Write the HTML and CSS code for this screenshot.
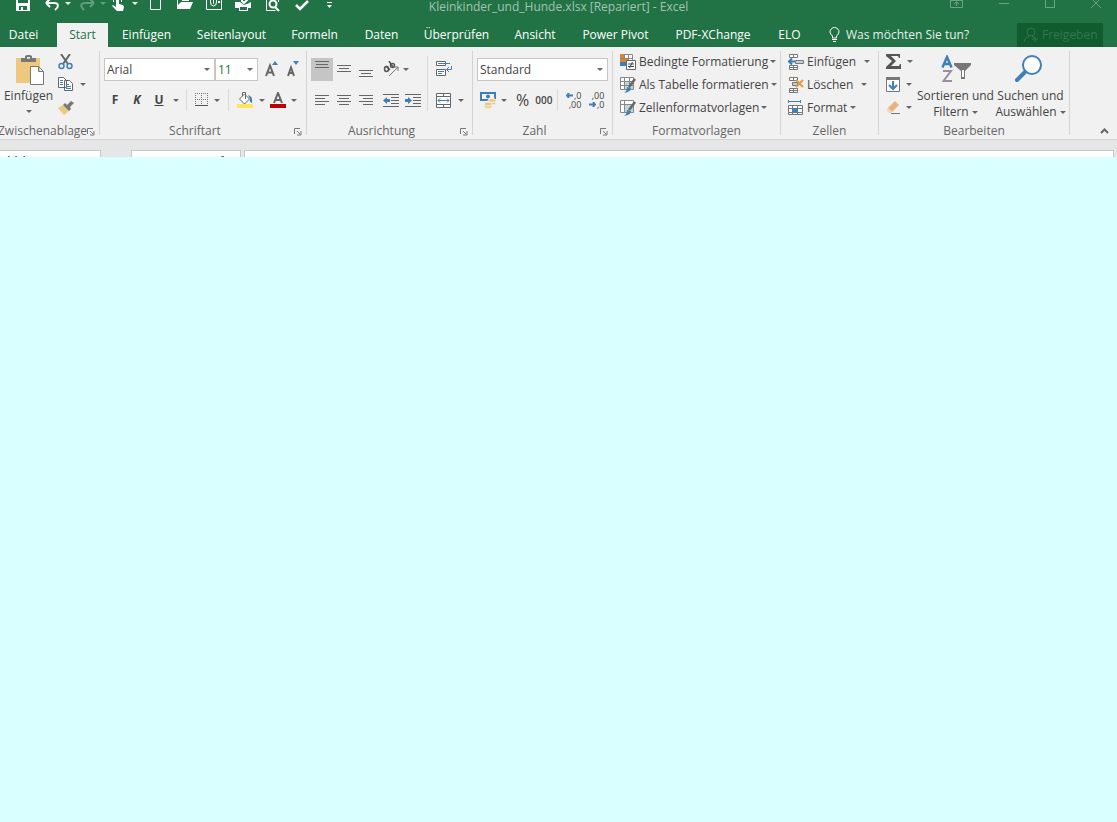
FILE: index.html
```html
<!DOCTYPE html>
<html lang="de">
<head>
<meta charset="utf-8">
<title>Kleinkinder_und_Hunde.xlsx [Repariert] - Excel</title>
<link rel="stylesheet" href="styles.css">
</head>
<body>
<header class="app-header">
  <div class="titlebar">
    <div class="qat">
      <button aria-label="Speichern"><svg width="14" height="12" viewBox="0 0 14 12"><path fill="#fff" fill-rule="evenodd" d="M0 0h2v3h10V0h2v11H0zM3 6v4h2V7h2v3h4V6z"/></svg></button>
      <button aria-label="Rückgängig"><svg width="16" height="12" viewBox="0 0 16 12"><path d="M1 3h8c5 0 5 4 1 7M1 3l4-4M1 3l4 4" fill="none" stroke="#fff" stroke-width="2"/></svg><i class="caret light"></i></button>
      <button class="dim" aria-label="Wiederholen"><svg width="16" height="12" viewBox="0 0 16 12"><path d="M14 3H6C0 3 0 6 4 10M14 3l-4-4M14 3l-4 4" fill="none" stroke="#fff" stroke-width="2"/></svg><i class="caret light"></i></button>
      <button aria-label="Fingereingabe"><svg width="13" height="12" viewBox="0 0 13 12"><path fill="#fff" d="M4 0h3v4l4 1 1 2-1 4H5L0 6l1-1 3 2zM1 0h1v2H1zM9 0h1v2H9z"/></svg><i class="caret light hand"></i></button>
      <button aria-label="Neu"><svg width="12" height="12" viewBox="0 0 12 12"><path d="M.5-2V9.500h10V-2" fill="none" stroke="#fff"/></svg></button>
      <button aria-label="Öffnen"><svg width="17" height="12" viewBox="0 0 17 12"><path fill="#fff" d="M0 0h1v5l3-3h12l-3 7H0zM5 0h7v1H5z"/></svg></button>
      <button aria-label="Kamera"><svg width="16" height="12" viewBox="0 0 16 12"><path d="M.5-1v10.500h15V-1M4.500 0v2q0 4 3 4t3-4V0M7.500 0v4" fill="none" stroke="#fff"/><path fill="#fff" d="M12 1h2v2h-2z"/></svg></button>
      <button aria-label="Schnelldruck"><svg width="17" height="12" viewBox="0 0 17 12"><path fill="#fff" fill-rule="evenodd" d="M0 2h5l4 3 3-1 4-2v6h-3v3H4V8H0zM5 7v3h7V7z"/><path d="M7-2v3l2 2 5-5" fill="none" stroke="#fff" stroke-width="2"/></svg></button>
      <button aria-label="Seitenansicht"><svg width="16" height="12" viewBox="0 0 16 12"><path d="M.5-1v11.500h9M12.500 0v2" fill="none" stroke="#fff"/><circle cx="7" cy="4" r="3.500" fill="none" stroke="#fff" stroke-width="2"/><path d="M9 7l4 4" stroke="#fff" stroke-width="2"/></svg></button>
      <button aria-label="Rechtschreibung"><svg width="14" height="12" viewBox="0 0 14 12"><path d="M1 5l4 4 8-8" fill="none" stroke="#fff" stroke-width="2.500"/></svg></button>
      <button aria-label="Symbolleiste anpassen"><svg width="7" height="12" viewBox="0 0 7 12"><path fill="#fff" d="M1 2h5v1H1zM1 5h5L3.500 8z"/></svg></button>
    </div>
    <div class="doc-title">Kleinkinder_und_Hunde.xlsx [Repariert] - Excel</div>
    <div class="window-controls">
      <button aria-label="Menübandanzeige"><svg width="14" height="12" viewBox="0 0 14 12"><path d="M.5-1v8.500h12V-1M0 .5h13M6.500 6V2M4 4l2.500-2L9 4"/></svg></button>
      <button aria-label="Minimieren"><svg width="11" height="12" viewBox="0 0 11 12"><path d="M0 3.500h10"/></svg></button>
      <button aria-label="Maximieren"><svg width="11" height="12" viewBox="0 0 11 12"><path d="M.5-1v8.500h9V-1"/></svg></button>
      <button aria-label="Schließen"><svg width="11" height="12" viewBox="0 0 11 12"><path d="M0-2l10 10M10-2L0 8"/></svg></button>
    </div>
  </div>
  <div class="tabbar">
    <nav class="tabs">
      <button class="file">Datei</button><button class="active">Start</button><button>Einfügen</button><button>Seitenlayout</button><button>Formeln</button><button>Daten</button><button>Überprüfen</button><button>Ansicht</button><button>Power Pivot</button><button>PDF-XChange</button><button>ELO</button>
    </nav>
    <button class="tell-me"><svg width="11" height="16" viewBox="0 0 11 16"><path d="M3.500 11V9Q1 7 1 5a4.500 4.500 0 0 1 9 0q0 2-2.500 4v2zM3 12.500h5M4 14.500h3" fill="none" stroke="#fff"/></svg>Was möchten Sie tun?</button>
    <button class="share"><svg width="16" height="16" viewBox="0 0 16 16"><circle cx="8" cy="5" r="4"/><path d="M1 15q0-4 5-6M9 9l2 2M12 9v6M9 12h6"/></svg>Freigeben</button>
  </div>
</header>

<section class="ribbon">
  <div class="group clipboard">
    <div class="body">
      <button class="big"><svg width="30" height="31" viewBox="0 0 30 31"><path fill="#edc87e" d="M0 3h24v25H0z"/><path fill="#777" fill-rule="evenodd" d="M5 3h4V1l2-1h3l2 1v2h4v4H5zm6-1v2h3V2z"/><path fill="#fff" stroke="#777" d="M14.500 11.500h8l5 5v13h-13zM22.500 11.500v5h5"/></svg><span>Einfügen</span><i class="caret"></i></button>
      <div class="stack">
        <button aria-label="Ausschneiden"><svg width="16" height="16" viewBox="0 0 16 16"><path d="M3 0l7 10M12 0L5 10" fill="none" stroke="#666" stroke-width="2"/><circle cx="3.500" cy="12" r="2.500" fill="none" stroke="#3f7fb8" stroke-width="1.500"/><circle cx="11.500" cy="12" r="2.500" fill="none" stroke="#3f7fb8" stroke-width="1.500"/></svg></button>
        <button aria-label="Kopieren"><svg width="16" height="15" viewBox="0 0 16 15"><path fill="#fff" stroke="#666" d="M.5.500h5l3 3v7h-8zM6.500 3.500h5l3 3v7h-8z"/><path d="M2 3.500h3M2 5.500h3M2 7.500h3M8 7.500h3M8 9.500h5M8 11.500h5" stroke="#3f7fb8"/></svg><i class="caret"></i></button>
        <button aria-label="Format übertragen"><svg width="16" height="14" viewBox="0 0 16 14"><path fill="#edc87e" d="M0 7l5-3 6 6-5 4z"/><path fill="#777" d="M5 4l2-2 2 2 4-4 3 2-4 4 1 2-2 2z"/></svg></button>
      </div>
    </div>
    <footer><span>Zwischenablage</span><button class="launch" aria-label="Zwischenablage öffnen"><svg width="8" height="8" viewBox="0 0 8 8"><path d="M.5 6V.5H6M3 3l3 3M7 3v4H3" fill="none" stroke="#777"/></svg></button></footer>
  </div>

  <div class="group font">
    <div class="body rows">
      <div class="row">
        <label class="combo name"><input value="Arial" aria-label="Schriftart"><i class="caret"></i></label><label class="combo size"><input value="11" aria-label="Schriftgrad"><i class="caret"></i></label>
        <button class="grow" aria-label="Schriftgrad vergrößern"><svg width="14" height="16" viewBox="0 0 14 16"><path class="a" d="M1 15L5 4.500 9 15M2.500 11.500h5"/><path class="tri" d="M7 4l3-4 3 4z"/></svg></button>
        <button class="grow" aria-label="Schriftgrad verkleinern"><svg width="14" height="16" viewBox="0 0 14 16"><path class="a" d="M2 15l3-8.500L8 15M3 12h4"/><path class="tri" d="M7 0h6l-3 4z"/></svg></button>
      </div>
      <div class="row second">
        <button class="letter">F</button><button class="letter italic">K</button><button class="letter underline">U</button><button class="drop" aria-label="Unterstreichen"><i class="caret"></i></button>
        <span class="sep"></span>
        <button class="pair" aria-label="Rahmen"><svg width="14" height="14" viewBox="0 0 14 14"><path d="M.5 0v12M6.500 0v12M12.500 0v12M0 .5h13M0 6.500h13" stroke="#777" stroke-dasharray="1 1"/><path d="M0 12.500h13" stroke="#555"/></svg><i class="caret"></i></button>
        <span class="sep"></span>
        <button class="pair" aria-label="Füllfarbe"><svg width="17" height="16" viewBox="0 0 17 16"><path d="M2.500 7l5-5 5 5-5 5zM5.500 4V.5h3V7" fill="#fff" stroke="#666"/><path fill="#3f7fb8" d="M11 3q5 1 4 8-3-1-2-4z"/><path fill="#ffe658" d="M0 12h16v4H0z"/></svg><i class="caret"></i></button>
        <button class="pair" aria-label="Schriftfarbe"><svg width="16" height="16" viewBox="0 0 16 16"><path d="M4 11L8 1l4 10M5 8h6" fill="none" stroke="#666" stroke-width="2"/><path fill="#c00000" d="M0 12h16v4H0z"/></svg><i class="caret"></i></button>
      </div>
    </div>
    <footer><span>Schriftart</span><button class="launch" aria-label="Schriftart öffnen"><svg width="8" height="8" viewBox="0 0 8 8"><path d="M.5 6V.5H6M3 3l3 3M7 3v4H3" fill="none" stroke="#777"/></svg></button></footer>
  </div>

  <div class="group align">
    <div class="body">
      <div class="rows">
        <div class="row">
          <button class="tool pressed" aria-label="Oben ausrichten"><svg width="14" height="16" viewBox="0 0 14 16"><path d="M0 .5h14M1 3.500h12M0 6.500h14"/></svg></button>
          <button class="tool" aria-label="Zentriert ausrichten"><svg width="14" height="16" viewBox="0 0 14 16"><path d="M0 4.500h14M2 7.500h10M0 10.500h14"/></svg></button>
          <button class="tool" aria-label="Unten ausrichten"><svg width="14" height="16" viewBox="0 0 14 16"><path d="M0 9.500h14M2 12.500h10M0 15.500h14"/></svg></button>
          <button class="pair orient" aria-label="Ausrichtung"><svg width="17" height="16" viewBox="0 0 17 16"><g fill="none" stroke="#555" stroke-width="1.500"><ellipse cx="3.500" cy="8" rx="2" ry="2.500"/><path d="M3 5l4 4M6 0l4 6"/><circle cx="9.500" cy="4.500" r="2"/></g><path d="M6 15l9-9M11 6h4v4" fill="none" stroke="#777"/></svg><i class="caret"></i></button>
        </div>
        <div class="row second">
          <button class="tool" aria-label="Linksbündig"><svg width="14" height="11" viewBox="0 0 14 11"><path d="M0 .5h14M0 3.500h10M0 6.500h14M0 9.500h10"/></svg></button>
          <button class="tool" aria-label="Zentriert"><svg width="14" height="11" viewBox="0 0 14 11"><path d="M0 .5h14M2 3.500h10M0 6.500h14M2 9.500h10"/></svg></button>
          <button class="tool" aria-label="Rechtsbündig"><svg width="14" height="11" viewBox="0 0 14 11"><path d="M0 .5h14M4 3.500h10M0 6.500h14M4 9.500h10"/></svg></button>
          <button class="tool indent" aria-label="Einzug verkleinern"><svg width="16" height="13" viewBox="0 0 16 13"><path d="M0 .5h16M8 3.500h8M8 6.500h8M8 9.500h8M0 12.500h16"/><path class="blue" d="M0 6.500L4 3v2h3v3H4v2z"/></svg></button>
          <button class="tool" aria-label="Einzug vergrößern"><svg width="16" height="13" viewBox="0 0 16 13"><path d="M0 .5h16M8 3.500h8M8 6.500h8M8 9.500h8M0 12.500h16"/><path class="blue" d="M7 6.500L3 3v2H0v3h3v2z"/></svg></button>
        </div>
      </div>
      <span class="sep tall"></span>
      <div class="rows merge">
        <div class="row"><button aria-label="Textumbruch"><svg width="17" height="16" viewBox="0 0 17 16"><path d="M.5.500h9v4h-9zM.5 8.500h9v6h-9z" fill="#fff" stroke="#666"/><path d="M2 2.500h12M2 10.500h6M2 12.500h4M15.500 5v3.500H11M13 6l-2.500 2.500L13 11" fill="none" stroke="#3f7fb8"/></svg></button></div>
        <div class="row second"><button class="pair" aria-label="Verbinden"><svg width="16" height="15" viewBox="0 0 16 15"><path d="M.5.500h14v14H.5zM.5 3.500h14M.5 11.500h14M7.500.5v3M7.500 11.500v3" fill="#fff" stroke="#666"/><path d="M2 7.500h11M4 5.500l-2 2 2 2M11 5.500l2 2-2 2" fill="none" stroke="#3f7fb8"/></svg><i class="caret"></i></button></div>
      </div>
    </div>
    <footer><span>Ausrichtung</span><button class="launch" aria-label="Ausrichtung öffnen"><svg width="8" height="8" viewBox="0 0 8 8"><path d="M.5 6V.5H6M3 3l3 3M7 3v4H3" fill="none" stroke="#777"/></svg></button></footer>
  </div>

  <div class="group number">
    <div class="body rows">
      <div class="row"><label class="combo format"><input value="Standard" aria-label="Zahlenformat"><i class="caret"></i></label></div>
      <div class="row second">
        <button class="pair" aria-label="Buchhaltungsformat"><svg width="17" height="17" viewBox="0 0 17 17"><path fill="#3f7fb8" fill-rule="evenodd" d="M0 0h16v9H0zM2 2v5h12V2z"/><circle cx="8" cy="4.500" r="2" fill="#3f7fb8"/><g fill="#edc87e" stroke="#f1f1f1"><ellipse cx="12" cy="11" rx="4" ry="2"/><ellipse cx="12" cy="8.500" rx="4" ry="2"/><ellipse cx="8" cy="14.500" rx="4" ry="2"/><ellipse cx="8" cy="12" rx="4" ry="2"/></g></svg><i class="caret"></i></button>
        <button class="percent">%</button><button class="thousand">000</button>
        <span class="sep"></span>
        <button class="decimal" aria-label="Dezimalstelle hinzufügen"><svg width="7" height="5" viewBox="0 0 7 5"><path d="M7 2.500H1M3 0L1 2.500 3 5"/></svg><span>,0</span><span class="full">,00</span></button>
        <button class="decimal" aria-label="Dezimalstelle löschen"><span class="full">,00</span><svg width="7" height="5" viewBox="0 0 7 5"><path d="M0 2.500h6M4 0l2 2.500L4 5"/></svg><span>,0</span></button>
      </div>
    </div>
    <footer><span>Zahl</span><button class="launch" aria-label="Zahl öffnen"><svg width="8" height="8" viewBox="0 0 8 8"><path d="M.5 6V.5H6M3 3l3 3M7 3v4H3" fill="none" stroke="#777"/></svg></button></footer>
  </div>

  <div class="group styles">
    <div class="body list">
      <button><svg width="16" height="16" viewBox="0 0 16 16"><path fill="#fff" stroke="#888" d="M.5.500h12v11H.5zM4.500 0v12M8.500 0v12M0 4.500h12"/><path fill="#d8862f" d="M0 0h4v4H0zM0 5h8v3H0zM0 9h4v3H0z"/><path fill="#3f7fb8" d="M0 8h6v4H0z"/><path fill="#fff" stroke="#666" d="M6.500 6.500h9v9h-9z"/><path d="M8 10h6M8 12.500h6M12.500 8l-3 6" stroke="#444"/></svg><span>Bedingte Formatierung</span><i class="caret"></i></button>
      <button><svg width="16" height="16" viewBox="0 0 16 16"><path fill="#fff" stroke="#888" d="M.5.500h13v12H.5z"/><path fill="#bcd6dc" d="M5 4h8v8H5z"/><path d="M4.500 0v13M9.500 0v13M0 4.500h14M0 8.500h14" stroke="#888"/><path d="M15 2l-6 8" stroke="#666" stroke-width="2.500"/><path fill="#3f7fb8" d="M7 10l4 1q0 4-7 5 3-2 3-6z"/></svg><span>Als Tabelle formatieren</span><i class="caret"></i></button>
      <button><svg width="16" height="16" viewBox="0 0 16 16"><path fill="#fff" stroke="#888" d="M.5.500h13v12H.5z"/><path d="M4.500 0v13M0 4.500h14" stroke="#888"/><path fill="#bcd6dc" d="M5 5h8v7H5z"/><path d="M15 2l-6 8" stroke="#666" stroke-width="2.500"/><path fill="#3f7fb8" d="M7 10l4 1q0 4-7 5 3-2 3-6z"/></svg><span>Zellenformatvorlagen</span><i class="caret"></i></button>
    </div>
    <footer><span>Formatvorlagen</span></footer>
  </div>

  <div class="group cells">
    <div class="body list">
      <button><svg width="16" height="16" viewBox="0 0 16 16"><path fill="#fff" stroke="#777" d="M1.500.5h8v3h-8zM5.500.5v3M1.500 11.500h8v4h-8zM5.500 11.500v4M1.500 13.500h8"/><path fill="#b9d4dd" stroke="#777" d="M7.500 6.500h8v3h-8z"/><path d="M7 7.500H1M4 4.500l-3 3 3 3" fill="none" stroke="#3f7fb8" stroke-width="2"/></svg><span class="wide">Einfügen</span><i class="caret"></i></button>
      <button><svg width="16" height="16" viewBox="0 0 16 16"><path fill="#fff" stroke="#777" d="M1.500.5h8v3h-8zM5.500.5v3M1.500 11.500h8v4h-8zM5.500 11.500v4M1.500 13.500h8"/><path fill="#b9d4dd" stroke="#777" d="M4.500 5.500h5v3h-5z"/><path d="M8 3l7 7M15 3l-7 7" stroke="#e09b3f" stroke-width="2"/></svg><span class="wide">Löschen</span><i class="caret"></i></button>
      <button><svg width="16" height="16" viewBox="0 0 16 16"><path d="M.5 0v3M12.500 0v3M1 1.500h11" stroke="#3f7fb8"/><path fill="#fff" stroke="#777" d="M.5 5.500h14v9H.5zM4.500 5v10M9.500 5v10M0 8.500h15M0 12.500h15"/><path fill="#3f7fb8" d="M4 8h6v4H4z"/></svg><span>Format</span><i class="caret"></i></button>
    </div>
    <footer><span>Zellen</span></footer>
  </div>

  <div class="group edit">
    <div class="body">
      <div class="stack">
        <button aria-label="Summe"><svg width="15" height="15" viewBox="0 0 15 15"><path fill="#555" d="M0 0h14v4h-1l-1-2H5l5 5-5 5h8l1-2h1v5H0v-2l6-6-6-5z"/></svg><i class="caret"></i></button>
        <button aria-label="Ausfüllen"><svg width="14" height="16" viewBox="0 0 14 16"><path fill="#fff" stroke="#777" d="M.5.500h13v14H.5z"/><path d="M0 1.500h14" stroke="#777" stroke-width="3"/><path d="M7 4v8M3 8l4 4 4-4" fill="none" stroke="#3f7fb8" stroke-width="2"/></svg><i class="caret"></i></button>
        <button aria-label="Löschen"><svg width="14" height="14" viewBox="0 0 14 14"><path fill="#e9b27d" d="M2 7l7-7 4 4-7 7z"/><path fill="#f6d5b5" d="M1 8l1-1 4 4-1 1H3L1 10z"/><path d="M5 12.500h9" stroke="#777"/></svg><i class="caret"></i></button>
      </div>
      <button class="big"><svg width="30" height="28" viewBox="0 0 30 28"><path d="M1.500 12.500L6 2l4.500 10.500M3 9h6" fill="none" stroke="#3f7fb8" stroke-width="2.500"/><path d="M2 16h8L2.500 26H11" fill="none" stroke="#9a8f9c" stroke-width="2"/><path fill="#777" d="M13 8h17v2l-6 6v8h-4v-8l-7-6z"/><path fill="#fff" d="M21 15h2v7h-2z"/></svg><span>Sortieren und<br>Filtern <i class="caret"></i></span></button>
      <button class="big find"><svg width="30" height="28" viewBox="0 0 30 28"><circle cx="18" cy="10" r="9" fill="#fff" stroke="#3f7fb8" stroke-width="2"/><path d="M11 17l-8 8" stroke="#3f7fb8" stroke-width="4" stroke-linecap="round"/></svg><span>Suchen und<br>Auswählen <i class="caret"></i></span></button>
    </div>
    <footer><span>Bearbeiten</span></footer>
  </div>
  <button class="collapse" aria-label="Menüband reduzieren"><svg width="9" height="6" viewBox="0 0 9 6"><path d="M1 5l3.500-3.500L8 5" fill="none" stroke="#666" stroke-width="2"/></svg></button>
</section>

<section class="formula-bar">
  <input class="name-box" value="A14" aria-label="Namenfeld">
  <div class="functions"><button aria-label="Funktion einfügen"><svg width="10" height="12" viewBox="0 0 10 12"><path d="M7 .5H5Q3 .5 3 4v7M1 4h5" fill="none" stroke="#666"/></svg></button></div>
  <input class="formula" aria-label="Bearbeitungsleiste">
</section>
<main class="sheet"></main>
</body>
</html>
```
FILE: styles.css
```css
* { box-sizing: border-box; }
body {
  margin: 0;
  min-height: 100vh;
  display: flex;
  flex-direction: column;
  font: 12px/16px "Open Sans", "Noto Sans", sans-serif;
  color: #444;
  background: #d9ffff;
  overflow: hidden;
}
button {
  padding: 0;
  border: 0;
  background: none;
  font: inherit;
  color: inherit;
  display: flex;
  align-items: center;
}
input { font: inherit; color: inherit; border: 0; outline: 0; padding: 0; background: none; }
svg { display: block; flex: none; }
.caret {
  display: inline-block;
  flex: none;
  border: 3px solid transparent;
  border-top-color: #666;
  border-bottom: 0;
}
.caret.light { border-top-color: #fff; }

.app-header { background: #217346; color: #fff; }
.titlebar { display: grid; grid-template-columns: 1fr auto 1fr; height: 23px; align-items: start; }
.qat {
  display: grid;
  grid-template-columns: 29px 35px 32px 38px 27px 29px 29px 31px 29px 31px 7px;
  padding-left: 16px;
}
.qat button { gap: 4px; }
.qat .hand { margin-left: 3px; }
.qat .caret { margin-bottom: 6px; }
.dim { opacity: .3; }
.doc-title { color: #a3c4b1; line-height: 14px; }
.window-controls { display: flex; justify-content: flex-end; gap: 35px; padding-right: 15px; }
.window-controls path { fill: none; stroke: #6da385; }
.tabbar { display: flex; height: 24px; }
.tabs { display: grid; grid-template-columns: 57px 51px 77px 93px 73px 61px 89px 68px 93px 102px 51px; }
.tabs button { justify-content: center; white-space: nowrap; }
.tabs .file { padding-right: 10px; }
.tabs .active { background: #f1f1f1; color: #217346; }
.tell-me { gap: 6px; margin-left: 14px; color: #e4efe8; }
.share { gap: 3px; margin: 0 14px 0 auto; padding: 0 6px; background: #105c2f; color: #32774d; width: 86px; }
.share svg { fill: none; stroke: #32774d; }

.ribbon { display: flex; height: 93px; padding-top: 4px; background: #f1f1f1; border-bottom: 1px solid #d2d2d2; }
.group { display: flex; flex-direction: column; flex: none; border-right: 1px solid #d4d4d4; margin-bottom: 4px; }
.body { display: flex; flex: 1; }
.group footer { position: relative; display: flex; justify-content: center; height: 8px; align-items: center; color: #666; white-space: nowrap; }
.launch { position: absolute; right: 4px; top: 1px; }
.clipboard { width: 100px; }
.font { width: 207px; }
.align { width: 166px; }
.number { width: 140px; }
.styles { width: 168px; }
.cells { width: 98px; }
.edit { width: 191px; }

.clipboard footer { justify-content: flex-start; }
.clipboard footer span { margin-left: -2px; }
.font footer, .align footer, .number footer { padding-right: 16px; }

.big { flex-direction: column; text-align: center; white-space: nowrap; }
.clipboard .big { width: 57px; padding-top: 4px; }
.clipboard .big svg { margin-left: 5px; }
.clipboard .big span { margin: 2px 0 6px; }
.stack { display: flex; flex-direction: column; }
.stack button { height: 23px; gap: 6px; }
.clipboard .stack { padding-left: 1px; }
.clipboard .stack, .edit .stack { margin-top: -1px; }

.rows { display: flex; flex-direction: column; }
.row { display: flex; align-items: center; height: 22px; margin-top: 7px; }
.row.second { margin-top: 9px; }
.sep { width: 1px; height: 22px; background: #d8d8d8; }
.sep.tall { height: 55px; margin-top: 5px; }
.pair { gap: 7px; }
.combo { display: flex; align-items: center; height: 23px; padding: 0 4px 0 2px; border: 1px solid #c6c6c6; background: #fff; }
.combo input { flex: 1; min-width: 0; width: 0; padding-top: 2px; }
.font .body { padding-left: 4px; }
.name { width: 111px; }
.size { width: 43px; }
.size input { color: #217346; }
.grow { margin-left: 7px; }
.grow .a { fill: none; stroke: #666; stroke-width: 2; }
.grow .tri { fill: #3f7fb8; }
.letter { width: 22px; justify-content: center; font-weight: 700; }
.italic { font-style: italic; }
.underline { text-decoration: underline; }
.drop { width: 16px; padding-left: 3px; }
.font .second .pair { margin-left: 5px; gap: 5px; }
.font .second .sep + .pair { margin-left: 8px; }
.font .second .pair + .sep { margin-left: 8px; }

.align .body { padding-left: 4px; }
.tool { width: 22px; height: 23px; justify-content: center; }
.tool svg { fill: none; stroke: #666; }
.tool .blue { fill: #3f7fb8; stroke: none; }
.pressed { background: #c5c5c5; }
.orient { margin-left: 6px; gap: 3px; }
.indent { margin-left: 3px; }
.align .sep { margin-left: 3px; }
.merge { padding-left: 8px; }
.merge .pair { gap: 6px; }

.number .body { padding-left: 4px; }
.format { width: 131px; }
.number .pair { margin-left: 3px; gap: 4px; }
.percent { margin-left: 9px; font-size: 16px; }
.thousand { margin: 0 5px 0 6px; font-size: 10px; font-weight: 600; }
.decimal {
  display: grid;
  grid-template-columns: 7px 8px;
  align-items: center;
  justify-items: end;
  width: 15px;
  margin-left: 8px;
  font-size: 9px;
  line-height: 9px;
}
.decimal .full { grid-column: 1 / 3; }
.decimal svg { fill: none; stroke: #3f7fb8; stroke-width: 2; }

.list { flex-direction: column; padding-left: 7px; margin-top: -1px; }
.list button { height: 23px; gap: 3px; white-space: nowrap; }
.styles .list button { gap: 2px; }
.styles .list svg { margin-right: 1px; }
.wide { margin-right: 5px; }
.edit .stack { padding-left: 7px; width: 39px; }
.edit .big { width: 75px; padding-top: 4px; }
.edit .big svg { margin-bottom: 5px; }
.edit .find svg { margin-right: 4px; }
.edit .big .caret { vertical-align: 2px; }
.collapse { margin: auto 8px 5px auto; }

.formula-bar { display: flex; height: 17px; padding: 10px 3px 0 0; background: #e6e6e6; overflow: hidden; }
.formula-bar > * { height: 20px; flex: none; border: 1px solid #c6c6c6; background: #fff; }
.formula-bar .name-box { width: 102px; margin-left: -1px; padding-left: 5px; }
.functions { width: 110px; margin: 0 3px 0 30px; display: flex; justify-content: flex-end; align-items: flex-start; padding: 5px 13px 0 0; }
.formula-bar .formula { flex: 1; }
.sheet { flex: 1; background: #d9ffff; }
```
